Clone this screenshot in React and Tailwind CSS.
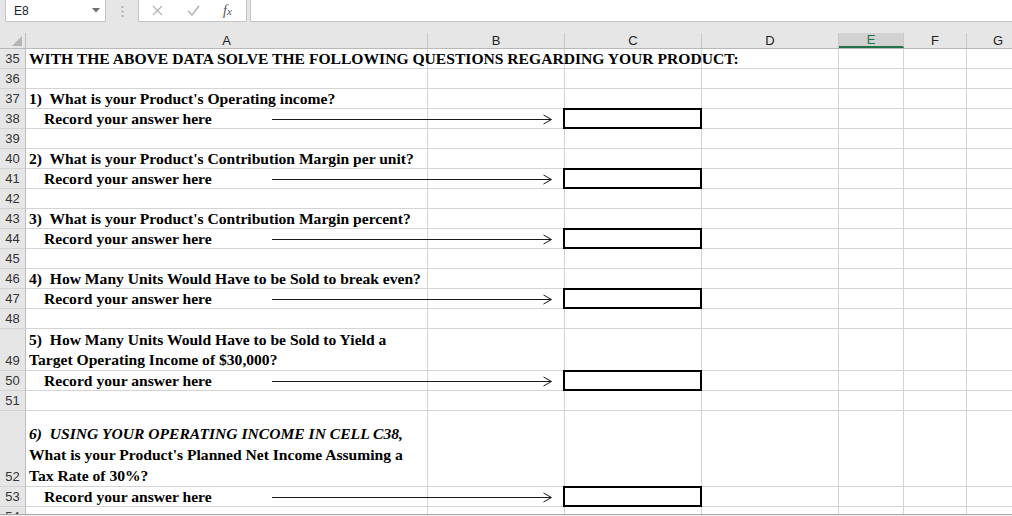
import React from 'react';

const cols = [
  { key: 'A', w: 'w-[402px]' },
  { key: 'B', w: 'w-[137px]' },
  { key: 'C', w: 'w-[137px]' },
  { key: 'D', w: 'w-[137px]' },
  { key: 'E', w: 'w-[65px]' },
  { key: 'F', w: 'w-[63px]' },
  { key: 'G', w: 'w-[63px]' },
];

const rows = [
  { n: 35, lines: ['WITH THE ABOVE DATA SOLVE THE FOLLOWING QUESTIONS REGARDING YOUR PRODUCT:'] },
  { n: 36 },
  { n: 37, lines: ["1)  What is your Product's Operating income?"] },
  { n: 38, answer: true },
  { n: 39 },
  { n: 40, lines: ["2)  What is your Product's Contribution Margin per unit?"] },
  { n: 41, answer: true },
  { n: 42 },
  { n: 43, lines: ["3)  What is your Product's Contribution Margin percent?"] },
  { n: 44, answer: true },
  { n: 45 },
  { n: 46, lines: ['4)  How Many Units Would Have to be Sold to break even?'] },
  { n: 47, answer: true },
  { n: 48 },
  { n: 49, h: 'h-[42px]', lines: ['5)  How Many Units Would Have to be Sold to Yield a', 'Target Operating Income of $30,000?'] },
  { n: 50, answer: true },
  { n: 51 },
  {
    n: 52,
    h: 'h-[76px]',
    lead: 'leading-[21px]',
    italicFirst: true,
    lines: ['6)  USING YOUR OPERATING INCOME IN CELL C38,', "What is your Product's Planned Net Income Assuming a", 'Tax Rate of 30%?'],
  },
  { n: 53, answer: true },
];

function Arrow() {
  return (
    <svg className="absolute left-[246px] top-0" width="282" height="19" viewBox="0 0 282 19">
      <line x1="0" y1="10.5" x2="279" y2="10.5" stroke="#1a1a1a" strokeWidth="1" />
      <polyline points="271.5,6 279.5,10.5 271.5,15" fill="none" stroke="#1a1a1a" strokeWidth="1" />
    </svg>
  );
}

function Row({ r }) {
  const h = r.h || 'h-[20px]';
  const single = !r.h;
  return (
    <div className={`flex ${h}`}>
      <div className="w-[26px] shrink-0 bg-[#e6e6e6] border-r border-r-[#bdbdbd] border-b border-b-[#d2d2d2] flex items-end justify-center text-[13px] leading-[19px] text-[#333]">
        {r.n}
      </div>
      {cols.map((c) => (
        <div
          key={c.key}
          className={`${c.w} shrink-0 border-r border-b border-[#d4d4d4] bg-white relative ${c.key === 'A' ? 'z-10' : ''}`}
        >
          {c.key === 'A' && r.lines && (
            <div
              className={`absolute left-[3px] ${single ? '-bottom-px' : 'bottom-0'} whitespace-pre font-['Liberation_Serif','Times_New_Roman',serif] font-bold text-[15.6px] text-black ${r.lead || 'leading-[20px]'}`}
            >
              {r.lines.map((l, i) => (
                <div key={i} className={r.italicFirst && i === 0 ? 'italic' : ''}>
                  {l}
                </div>
              ))}
            </div>
          )}
          {c.key === 'A' && r.answer && (
            <>
              <div className="absolute left-[18px] -bottom-px whitespace-pre font-['Liberation_Serif','Times_New_Roman',serif] font-bold text-[15.6px] leading-[20px] text-black">
                Record your answer here
              </div>
              <Arrow />
            </>
          )}
          {c.key === 'C' && r.answer && (
            <div className="absolute -top-px -left-[2px] -right-px -bottom-px border-2 border-black z-20" />
          )}
        </div>
      ))}
    </div>
  );
}

export default function App() {
  return (
    <div className="w-[1012px] h-[516px] overflow-hidden bg-white font-['Liberation_Sans',Arial,sans-serif] relative">
      {/* formula bar */}
      <div className="h-[22px] bg-[#e6e6e6] flex items-stretch">
        <div className="ml-[5px] w-[101px] bg-white border border-t-0 border-[#c6c6c6] flex items-center justify-between pl-[8px] pr-[5px]">
          <span className="text-[12px] text-[#222]">E8</span>
          <svg width="8" height="5" viewBox="0 0 8 5">
            <polygon points="0,0 8,0 4,4.5" fill="#707070" />
          </svg>
        </div>
        <div className="w-[32px] flex items-center justify-center">
          <svg width="3" height="11" viewBox="0 0 3 11">
            <rect x="0.5" y="0" width="2" height="2" fill="#b0b0b0" />
            <rect x="0.5" y="4.5" width="2" height="2" fill="#b0b0b0" />
            <rect x="0.5" y="9" width="2" height="2" fill="#b0b0b0" />
          </svg>
        </div>
        <div className="w-[109px] bg-white border border-t-0 border-[#c6c6c6] flex items-center">
          <svg className="ml-[13px]" width="11" height="11" viewBox="0 0 11 11">
            <line x1="1" y1="1" x2="10" y2="10" stroke="#b4b4b4" strokeWidth="1.3" />
            <line x1="10" y1="1" x2="1" y2="10" stroke="#b4b4b4" strokeWidth="1.3" />
          </svg>
          <svg className="ml-[24px]" width="13" height="11" viewBox="0 0 13 11">
            <polyline points="1,6 5,10 12,1" fill="none" stroke="#b4b4b4" strokeWidth="1.6" />
          </svg>
          <span className="ml-[23px] font-['Liberation_Serif',serif] italic text-[14px] text-[#555] leading-none">
            f<span className="text-[11px]">x</span>
          </span>
        </div>
        <div className="ml-[3px] flex-1 bg-white border border-t-0 border-r-0 border-[#c6c6c6]" />
      </div>
      <div className="h-[11px] bg-[#e6e6e6]" />
      {/* column headers */}
      <div className="flex h-[16px] bg-[#e6e6e6] border-b border-[#b8b8b8]">
        <div className="w-[26px] shrink-0 border-r border-[#bdbdbd] flex items-end justify-end pr-[2px] pb-[1px]">
          <svg width="11" height="11" viewBox="0 0 11 11">
            <polygon points="10,0 10,10 0,10" fill="#b4b4b4" />
          </svg>
        </div>
        {cols.map((c) => (
          <div
            key={c.key}
            className={`${c.w} shrink-0 border-r border-[#c8c8c8] flex items-center justify-center text-[13px] leading-none ${
              c.key === 'E' ? 'bg-[#d2d2d2] text-[#217346] border-b-2 border-b-[#217346]' : 'text-[#222]'
            }`}
          >
            {c.key}
          </div>
        ))}
      </div>
      {rows.map((r) => (
        <Row key={r.n} r={r} />
      ))}
      <div className="flex h-[7px]">
        <div className="w-[26px] shrink-0 bg-[#e6e6e6] border-r border-[#bdbdbd] overflow-hidden text-[13px] leading-[19px] text-[#333] text-center">
          54
        </div>
        {cols.map((c) => (
          <div key={c.key} className={`${c.w} shrink-0 border-r border-[#d4d4d4]`} />
        ))}
      </div>
      <div className="h-[2px] bg-[#f0f0f0] border-t border-[#a8a8a8]" />
    </div>
  );
}
